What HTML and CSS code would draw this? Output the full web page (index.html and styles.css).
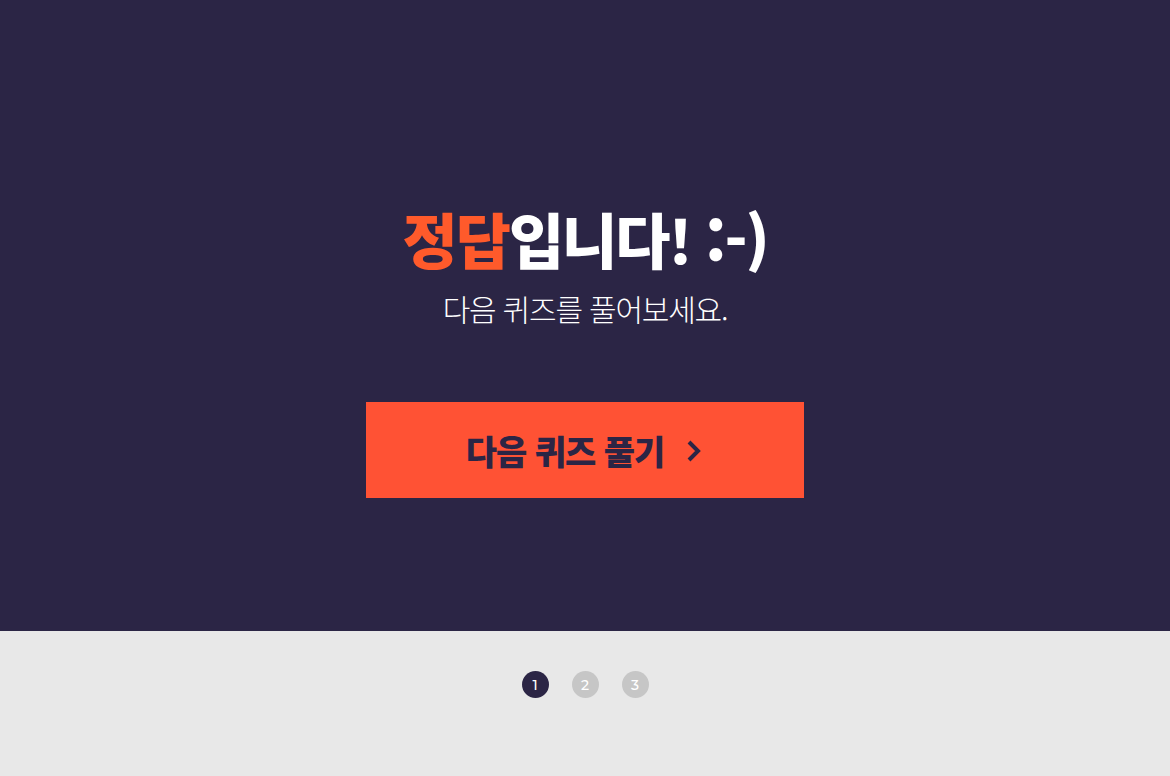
FILE: index.html
```html
<!DOCTYPE html>
<html lang="ko">
<head>
<meta charset="utf-8">
<link rel="stylesheet" href="styles.css">
</head>
<body>
<section class="hero">
  <h1 class="title"><span class="accent">정답</span>입니다! :-)</h1>
  <p class="subtitle">다음 퀴즈를 풀어보세요.</p>
  <a class="next-btn" href="#">
    <span class="next-label">다음 퀴즈 풀기</span>
    <svg class="chev" width="20" height="26" viewBox="0 0 20 26"><path d="M5 4 L14 13 L5 22" fill="none" stroke="#2b2545" stroke-width="4"/></svg>
  </a>
</section>
<nav class="pager">
  <span class="dot active">1</span>
  <span class="dot">2</span>
  <span class="dot">3</span>
</nav>
</body>
</html>
```
FILE: styles.css
```css
html, body { margin: 0; padding: 0; }
body {
  width: 1170px; height: 776px; overflow: hidden;
  background: #e8e8e8;
  font-family: "Noto Sans CJK KR", "Noto Sans", sans-serif;
}
.hero {
  height: 631px;
  background: #2b2545;
  display: flex; flex-direction: column; align-items: center;
  box-sizing: border-box;
  padding-top: 198px;
}
.title {
  margin: 0;
  font-size: 60px; font-weight: 900; line-height: 80px;
  color: #ffffff; letter-spacing: -2px;
}
.accent { color: #ff5a2b; }
.subtitle {
  margin: 0; margin-top: 8px;
  font-size: 30px; font-weight: 300; line-height: 44px;
  color: #ffffff; letter-spacing: -1.2px;
}
.next-btn {
  margin-top: 72px;
  width: 438px; height: 96px;
  background: #ff5234;
  display: flex; align-items: center; justify-content: center; gap: 20px;
  text-decoration: none;
}
.next-label {
  font-size: 34px; font-weight: 900; color: #2b2545; letter-spacing: -1px;
}
.chev { margin-top: 2px; }
.pager {
  display: flex; justify-content: center; gap: 23px;
  padding-top: 40px;
}
.dot {
  width: 27px; height: 27px; border-radius: 50%;
  background: #c6c6c6; color: #ffffff;
  font-family: "Montserrat", "Noto Sans", sans-serif;
  font-size: 14px; font-weight: 500;
  display: flex; align-items: center; justify-content: center;
}
.dot.active { background: #2b2545; }
```
